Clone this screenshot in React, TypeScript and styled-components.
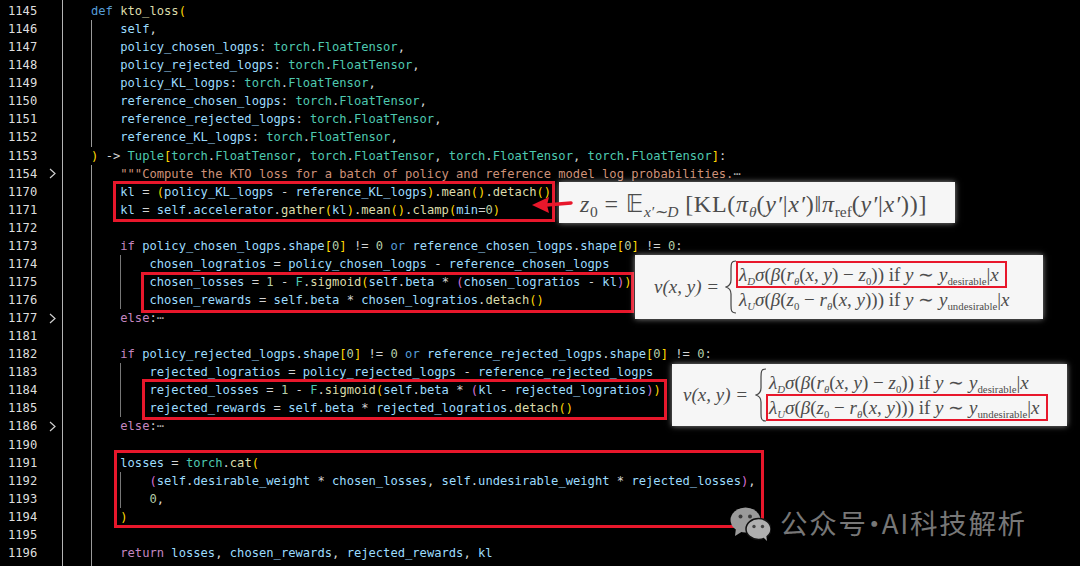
import React from "react";
import styled, { createGlobalStyle } from "styled-components";

const Global = createGlobalStyle`
  html, body { margin: 0; padding: 0; background: #000; }
  #root { width: 1080px; height: 566px; overflow: hidden; }
`;

const ROW = 18.07;
const CH = 7.31;

const Page = styled.div`
  position: relative;
  width: 1080px;
  height: 566px;
  overflow: hidden;
  background: #000;
  display: flex;
  font-family: "DejaVu Sans Mono", monospace;
  font-size: 12.14px;
  white-space: pre;
`;

const Gutter = styled.div`
  width: 62px;
  flex: none;
  padding-top: 2px;
  border-right: 1px solid #b4b4b4;
  color: #dedede;
`;

const GutterRow = styled.div`
  height: ${ROW}px;
  line-height: ${ROW}px;
  padding-left: 8px;
  display: flex;
  align-items: center;
  gap: 12px;
`;

const Chevron = styled.svg`
  width: 7px;
  height: 11px;
  flex: none;
`;

const CodeArea = styled.div`
  flex: 1;
  padding: 2px 0 0 28px;
  min-width: 0;
`;

const Block = styled.div<{ $strong?: boolean; $grow?: number }>`
  border-left: 1px solid ${(p) => (p.$strong ? "#9a9a9a" : "#777")};
  padding-left: ${CH * 4 - 1}px;
  padding-bottom: ${(p) => p.$grow ?? 0}px;
`;

const Line = styled.div`
  height: ${ROW}px;
  line-height: ${ROW}px;
`;

const colors = {
  kw: "#569cd6",
  ctl: "#c586c0",
  cls: "#4ec9b0",
  fn: "#dcdcaa",
  id: "#9cdcfe",
  num: "#b5cea8",
  op: "#d4d4d4",
  str: "#ce9178",
  b0: "#ffd700",
  b1: "#da70d6",
  b2: "#179fff",
};
type Kind = keyof typeof colors;

const Tok = styled.span<{ $kind: Kind }>`
  color: ${(p) => colors[p.$kind]};
`;

const Fold = styled.span`
  color: #a8a8a8;
`;

function tokenize(text: string, startDepth: number) {
  const parts = text.match(/\s+|[A-Za-z_][A-Za-z0-9_]*|\d+|->|!=|./g) ?? [];
  let depth = startDepth;
  return parts.map((t, i) => {
    let kind: Kind = "op";
    if (/^\d+$/.test(t)) kind = "num";
    else if (/^[A-Za-z_]/.test(t)) {
      const next = parts[i + 1];
      if (t === "def" || t === "or") kind = "kw";
      else if (t === "if" || t === "else" || t === "return") kind = "ctl";
      else if (t === "torch" || t === "F" || t === "Tuple" || t === "FloatTensor") kind = "cls";
      else if (next === "(") kind = "fn";
      else kind = "id";
    } else if (/[(\[]/.test(t)) {
      kind = (["b0", "b1", "b2"] as Kind[])[depth % 3];
      depth += 1;
    } else if (/[)\]]/.test(t)) {
      depth -= 1;
      kind = (["b0", "b1", "b2"] as Kind[])[depth % 3];
    }
    return { t, kind };
  });
}

const Code = ({ children, depth = 0, folded }: { children: string; depth?: number; folded?: boolean }) => (
  <Line>
    {tokenize(children, depth).map((p, i) => (
      <Tok key={i} $kind={p.kind}>
        {p.t}
      </Tok>
    ))}
    {folded && <Fold>⋯</Fold>}
  </Line>
);

const numbers: [number, boolean][] = [];
const range = (a: number, b: number) => {
  for (let i = a; i <= b; i++) numbers.push([i, i === 1154 || i === 1177 || i === 1186]);
};
range(1145, 1154);
range(1170, 1177);
range(1181, 1186);
range(1190, 1196);

/* Annotations that lie over the code */
const RedBox = styled.div<{ $x: number; $y: number; $w: number; $h: number }>`
  position: absolute;
  left: ${(p) => p.$x}px;
  top: ${(p) => p.$y}px;
  width: ${(p) => p.$w}px;
  height: ${(p) => p.$h}px;
  box-sizing: border-box;
  border: 3px solid #e8172b;
`;

const Card = styled.div<{ $x: number; $y: number; $w: number; $h: number }>`
  position: absolute;
  left: ${(p) => p.$x}px;
  top: ${(p) => p.$y}px;
  width: ${(p) => p.$w}px;
  height: ${(p) => p.$h}px;
  box-sizing: border-box;
  background: #f6f6f6;
  box-shadow: 0 0 6px rgba(255, 255, 255, 0.55);
  display: flex;
  align-items: center;
  color: #4c4c4c;
  font-family: "Liberation Serif", serif;
  white-space: nowrap;
`;

const TopFormula = styled.div`
  font-size: 24px;
  padding: 2px 0 0 21px;
  letter-spacing: 0.75px;
`;

const Sub = styled.sub`
  font-size: 10.8px;
  line-height: 0;
  vertical-align: -0.35em;
  letter-spacing: 0;
`;

const TopSub = styled(Sub)`
  font-size: 15.5px;
`;

const Blackboard = styled.span`
  font-family: "DejaVu Sans", sans-serif;
`;

const Lhs = styled.div<{ $pad: number; $w: number }>`
  box-sizing: border-box;
  font-size: 19px;
  font-style: italic;
  padding-left: ${(p) => p.$pad}px;
  width: ${(p) => p.$w}px;
  flex: none;
`;

const Brace = styled.svg`
  width: 12px;
  height: 54px;
  flex: none;
`;

const Cases = styled.div`
  display: flex;
  flex-direction: column;
  font-size: 19px;
  line-height: 25px;
`;

const Case = styled.div<{ $marked?: boolean }>`
  width: fit-content;
  height: 25px;
  padding: 0 ${(p) => (p.$marked ? 7 : 2)}px 0 2px;
  outline: ${(p) => (p.$marked ? "2px solid #e8172b" : "none")};
  outline-offset: -1px;
`;

const Watermark = styled.div`
  position: absolute;
  left: 730px;
  top: 502px;
  display: flex;
  align-items: center;
  gap: 9px;
  color: rgba(255, 255, 255, 0.47);
  font-family: "Noto Sans CJK SC", sans-serif;
  font-size: 27.5px;
  line-height: 40px;
  letter-spacing: 1.7px;
`;

const Dot = styled.span`
  margin: 0 -8px 0 -7px;
`;

const Logo = styled.svg`
  width: 41px;
  height: 34px;
  flex: none;
  margin-top: 3px;
`;

const ArrowMark = styled.svg`
  position: absolute;
  left: 530px;
  top: 192px;
  width: 44px;
  height: 24px;
`;

const CaseOne = () => (
  <>
    <i>λ</i>
    <Sub><i>D</i></Sub>
    <i>σ</i>(<i>β</i>(<i>r</i>
    <Sub><i>θ</i></Sub>(<i>x</i>, <i>y</i>) − <i>z</i>
    <Sub>0</Sub>)) if <i>y</i> ∼ <i>y</i>
    <Sub>desirable</Sub>|<i>x</i>
  </>
);

const CaseTwo = () => (
  <>
    <i>λ</i>
    <Sub><i>U</i></Sub>
    <i>σ</i>(<i>β</i>(<i>z</i>
    <Sub>0</Sub> − <i>r</i>
    <Sub><i>θ</i></Sub>(<i>x</i>, <i>y</i>))) if <i>y</i> ∼ <i>y</i>
    <Sub>undesirable</Sub>|<i>x</i>
  </>
);

const BraceMark = () => (
  <Brace viewBox="0 0 12 54">
    <path d="M11 1 C6 1 6 4 6 9 V20 C6 24 4 26 1 27 C4 28 6 30 6 34 V45 C6 50 6 53 11 53" fill="none" stroke="#444" strokeWidth="1.2" />
  </Brace>
);

export default function App() {
  return (
    <>
      <Global />
      <Page>
        <Gutter>
          {numbers.map(([n, fold]) => (
            <GutterRow key={n}>
              {n}
              {fold && (
                <Chevron viewBox="0 0 7 11">
                  <path d="M1 1 L6 5.5 L1 10" fill="none" stroke="#d0d0d0" strokeWidth="1.2" />
                </Chevron>
              )}
            </GutterRow>
          ))}
        </Gutter>
        <CodeArea>
          <Code>def kto_loss(</Code>
          <Block $strong>
            <Code>self,</Code>
            <Code>policy_chosen_logps: torch.FloatTensor,</Code>
            <Code>policy_rejected_logps: torch.FloatTensor,</Code>
            <Code>policy_KL_logps: torch.FloatTensor,</Code>
            <Code>reference_chosen_logps: torch.FloatTensor,</Code>
            <Code>reference_rejected_logps: torch.FloatTensor,</Code>
            <Code>reference_KL_logps: torch.FloatTensor,</Code>
          </Block>
          <Code depth={1}>{") -> Tuple[torch.FloatTensor, torch.FloatTensor, torch.FloatTensor, torch.FloatTensor]:"}</Code>
          <Block $strong $grow={6}>
            <Line>
              <Tok $kind="str">"""Compute the KTO loss for a batch of policy and reference model log probabilities.</Tok>
              <Fold>⋯</Fold>
            </Line>
            <Code>kl = (policy_KL_logps - reference_KL_logps).mean().detach()</Code>
            <Code>kl = self.accelerator.gather(kl).mean().clamp(min=0)</Code>
            <Line />
            <Code>if policy_chosen_logps.shape[0] != 0 or reference_chosen_logps.shape[0] != 0:</Code>
            <Block>
              <Code>chosen_logratios = policy_chosen_logps - reference_chosen_logps</Code>
              <Code>chosen_losses = 1 - F.sigmoid(self.beta * (chosen_logratios - kl))</Code>
              <Code>chosen_rewards = self.beta * chosen_logratios.detach()</Code>
            </Block>
            <Code folded>else:</Code>
            <Line />
            <Code>if policy_rejected_logps.shape[0] != 0 or reference_rejected_logps.shape[0] != 0:</Code>
            <Block>
              <Code>rejected_logratios = policy_rejected_logps - reference_rejected_logps</Code>
              <Code>rejected_losses = 1 - F.sigmoid(self.beta * (kl - rejected_logratios))</Code>
              <Code>rejected_rewards = self.beta * rejected_logratios.detach()</Code>
            </Block>
            <Code folded>else:</Code>
            <Line />
            <Code>losses = torch.cat(</Code>
            <Block>
              <Code depth={1}>(self.desirable_weight * chosen_losses, self.undesirable_weight * rejected_losses),</Code>
              <Code depth={1}>0,</Code>
            </Block>
            <Code depth={1}>)</Code>
            <Line />
            <Code>return losses, chosen_rewards, rejected_rewards, kl</Code>
          </Block>
        </CodeArea>

        <RedBox $x={113} $y={181} $w={442} $h={41} />
        <RedBox $x={141} $y={272} $w={493} $h={41} />
        <RedBox $x={142} $y={379} $w={525} $h={41} />
        <RedBox $x={114} $y={450} $w={650} $h={78} />

        <Card $x={559} $y={182} $w={396} $h={41}>
          <TopFormula>
            <i>z</i>
            <TopSub>0</TopSub> = <Blackboard>𝔼</Blackboard>
            <TopSub><i>x′∼D</i></TopSub> [KL(<i>π</i>
            <TopSub><i>θ</i></TopSub>(<i>y′</i>|<i>x′</i>)‖<i>π</i>
            <TopSub>ref</TopSub>(<i>y′</i>|<i>x′</i>))]
          </TopFormula>
        </Card>
        <ArrowMark viewBox="0 0 44 24">
          <path d="M41 11 L16 13" stroke="#e8172b" strokeWidth="3.5" strokeLinecap="round" fill="none" />
          <path d="M2 13 L19 5 L17 13 L19 21 Z" fill="#e8172b" />
        </ArrowMark>

        <Card $x={635} $y={255} $w={408} $h={64}>
          <Lhs $pad={19} $w={90}>v(x, y) =</Lhs>
          <BraceMark />
          <Cases>
            <Case $marked><CaseOne /></Case>
            <Case><CaseTwo /></Case>
          </Cases>
        </Card>

        <Card $x={672} $y={364} $w={395} $h={62}>
          <Lhs $pad={11} $w={83}>v(x, y) =</Lhs>
          <BraceMark />
          <Cases>
            <Case><CaseOne /></Case>
            <Case $marked><CaseTwo /></Case>
          </Cases>
        </Card>

        <Watermark>
          <Logo viewBox="0 0 41 34">
            <ellipse cx="15.5" cy="13" rx="15" ry="12.5" fill="#9a9a9a" />
            <path d="M6 21 L5 29 L13 24 Z" fill="#9a9a9a" />
            <circle cx="10.5" cy="9.5" r="2" fill="#3a3a3a" />
            <circle cx="20" cy="9.5" r="2" fill="#3a3a3a" />
            <ellipse cx="28.5" cy="22" rx="12.5" ry="10.5" stroke="#111" strokeWidth="1.5" fill="#b0b0b0" />
            <path d="M33 30 L37 34 L36 27 Z" fill="#b0b0b0" />
            <circle cx="24" cy="19.5" r="1.7" fill="#444" />
            <circle cx="32.5" cy="19.5" r="1.7" fill="#444" />
          </Logo>
          <span>公众号<Dot>·</Dot>AI科技解析</span>
        </Watermark>
      </Page>
    </>
  );
}
